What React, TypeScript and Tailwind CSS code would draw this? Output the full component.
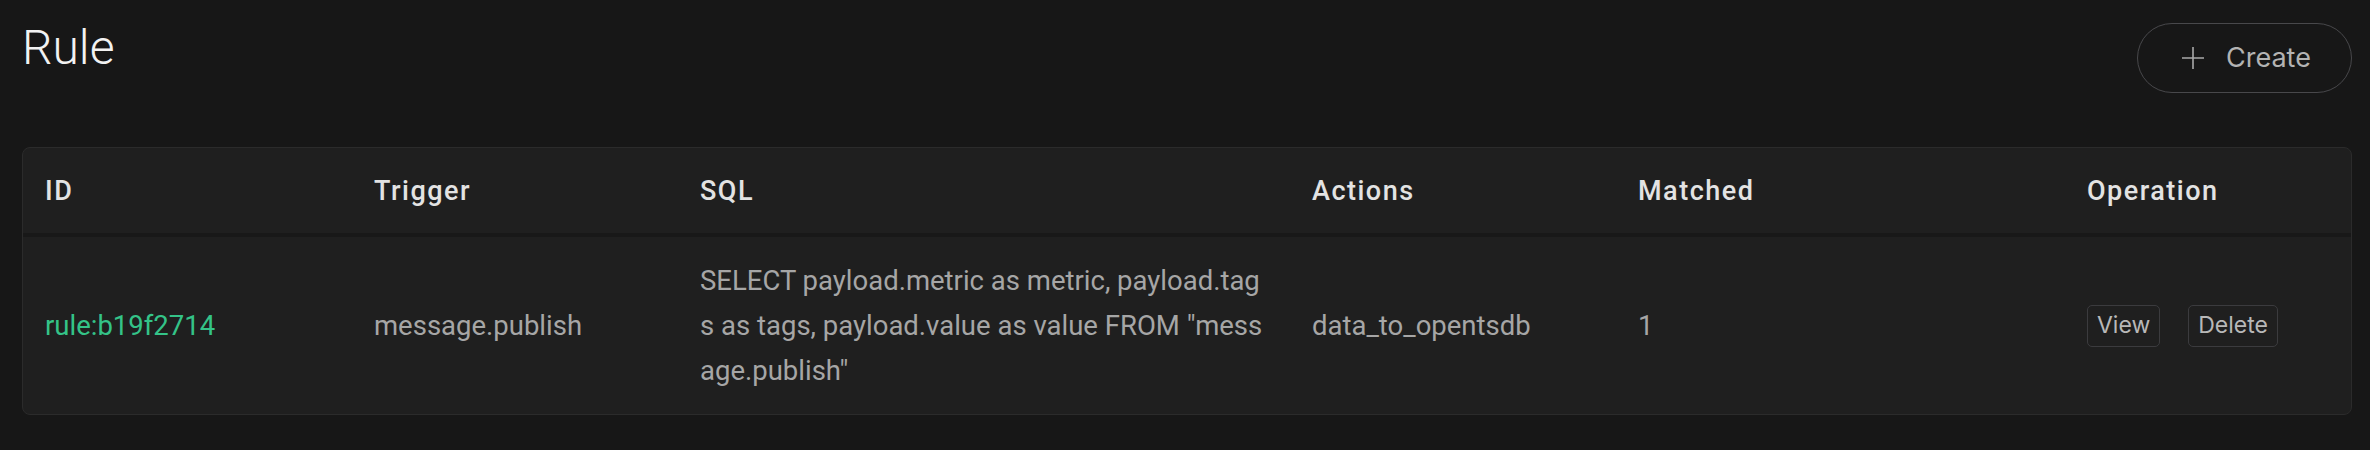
import React from "react";

const cols = "grid grid-cols-[329px_326px_612px_326px_449px_1fr]";

const headers = ["ID", "Trigger", "SQL", "Actions", "Matched", "Operation"];

function PlusIcon() {
  return (
    <svg width="22" height="22" viewBox="0 0 22 22" fill="none" className="shrink-0">
      <path d="M0 11h22M11 0v22" stroke="#a9a9a9" strokeWidth="1.6" />
    </svg>
  );
}

export default function App() {
  return (
    <div className="min-h-[450px] w-full bg-[#171717] pl-[22px] pr-[18px] pt-[20px] font-['Roboto',sans-serif]">
      {/* Page header */}
      <div className="flex items-start justify-between">
        <h1 className="text-[48px] font-light leading-[56px] text-[#f2f2f2]">Rule</h1>
        <button className="mt-[3px] flex h-[70px] w-[215px] items-center gap-[22px] rounded-full border-[1.5px] border-[#48484b] pl-[44px] font-['Inter',sans-serif] text-[27px] text-[#b3b3b3]">
          <PlusIcon />
          <span>Create</span>
        </button>
      </div>

      {/* Table */}
      <div className="mt-[54px] overflow-hidden rounded-[8px] border-[1.5px] border-[#2b2b2b] bg-[#1f1f1f]">
        <div className={`${cols} h-[85px] items-center`}>
          {headers.map((h) => (
            <div
              key={h}
              className="pl-[22px] text-[27px] font-medium leading-[40px] tracking-[1.5px] text-[#e3e3e3]"
            >
              {h}
            </div>
          ))}
        </div>

        <div className={`${cols} items-center border-t-[4px] border-[#181818] text-[27.5px] leading-[45px] text-[#a6a6a6]`}>
          <div className="pl-[22px] text-[#34c388]">rule:b19f2714</div>
          <div className="pl-[22px]">message.publish</div>
          <div className="break-all py-[21px] pl-[22px] pr-[24px]">
            SELECT payload.metric as metric, payload.tags as tags, payload.value as value FROM "message.publish"
          </div>
          <div className="pl-[22px]">data_to_opentsdb</div>
          <div className="pl-[22px]">1</div>
          <div className="flex items-center gap-[28px] pl-[22px] font-['Inter',sans-serif]">
            <button className="h-[42px] rounded-[5px] border-[1.5px] border-[#3b3b3e] px-[9px] text-[23px] leading-none text-[#b8b8b8]">
              View
            </button>
            <button className="h-[42px] rounded-[5px] border-[1.5px] border-[#3b3b3e] px-[9px] text-[23px] leading-none text-[#b8b8b8]">
              Delete
            </button>
          </div>
        </div>
      </div>
    </div>
  );
}
